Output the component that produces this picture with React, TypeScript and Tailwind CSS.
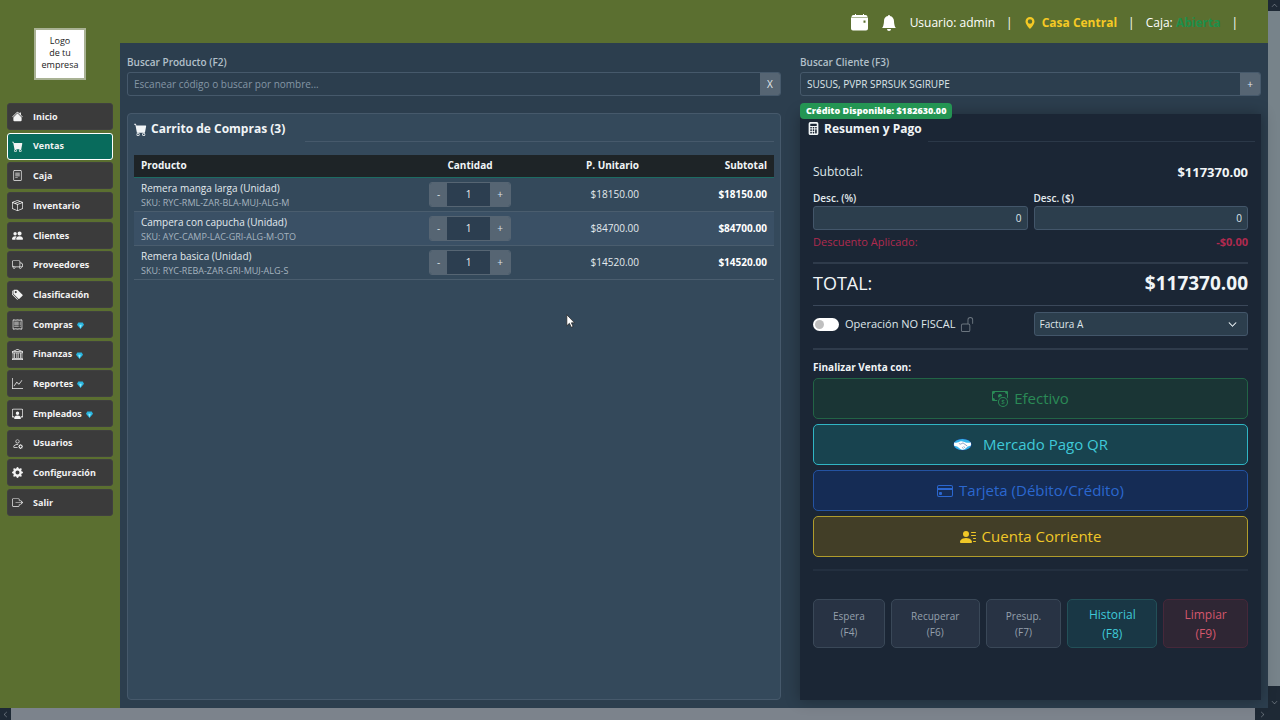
import React, { useState } from 'react';
import type { IconType } from 'react-icons';
import {
  BsBank,
  BsBellFill,
  BsBoxArrowRight,
  BsBoxSeam,
  BsCalculatorFill,
  BsCartFill,
  BsCashCoin,
  BsChevronDown,
  BsCreditCard,
  BsFileText,
  BsGearFill,
  BsGeoAltFill,
  BsGraphUp,
  BsHouseFill,
  BsPeopleFill,
  BsPersonGear,
  BsPersonLinesFill,
  BsPersonWorkspace,
  BsReceipt,
  BsTagsFill,
  BsTruck,
  BsUnlock,
} from 'react-icons/bs';

interface MenuItem {
  label: string;
  icon: IconType;
  premium?: boolean;
}

interface CartItem {
  name: string;
  sku: string;
  price: number;
}

const menu: MenuItem[] = [
  { label: 'Inicio', icon: BsHouseFill },
  { label: 'Ventas', icon: BsCartFill },
  { label: 'Caja', icon: BsFileText },
  { label: 'Inventario', icon: BsBoxSeam },
  { label: 'Clientes', icon: BsPeopleFill },
  { label: 'Proveedores', icon: BsTruck },
  { label: 'Clasificación', icon: BsTagsFill },
  { label: 'Compras', icon: BsReceipt, premium: true },
  { label: 'Finanzas', icon: BsBank, premium: true },
  { label: 'Reportes', icon: BsGraphUp, premium: true },
  { label: 'Empleados', icon: BsPersonWorkspace, premium: true },
  { label: 'Usuarios', icon: BsPersonGear },
  { label: 'Configuración', icon: BsGearFill },
  { label: 'Salir', icon: BsBoxArrowRight },
];

const items: CartItem[] = [
  { name: 'Remera manga larga (Unidad)', sku: 'RYC-RML-ZAR-BLA-MUJ-ALG-M', price: 18150 },
  { name: 'Campera con capucha (Unidad)', sku: 'AYC-CAMP-LAC-GRI-ALG-M-OTO', price: 84700 },
  { name: 'Remera basica (Unidad)', sku: 'RYC-REBA-ZAR-GRI-MUJ-ALG-S', price: 14520 },
];

const money = (value: number) => `$${value.toFixed(2)}`;

const Gem = () => (
  <svg viewBox="0 0 16 16" className="mt-[2px] ml-1 h-[7px] w-[7px]" aria-hidden="true">
    <path d="M3 1h10l3 5-8 10L0 6z" fill="#29b6e0" />
    <path d="M5 6h6l-3 9z" fill="#8be9fb" />
  </svg>
);

const CalendarIcon = () => (
  <svg viewBox="0 0 17 17" className="h-[17px] w-[17px]" fill="currentColor" aria-hidden="true">
    <path d="M4 0h1v1h7V0h1v1h1.500A2 2 0 0 1 16.500 3H.5a2 2 0 0 1 2-2H4z" />
    <path
      fillRule="evenodd"
      d="M0 3.600h17V14.500a2 2 0 0 1-2 2H2a2 2 0 0 1-2-2zM12.500 6.500v2.200h2V6.500z"
    />
  </svg>
);

const Handshake = () => (
  <svg viewBox="0 0 36 24" className="mr-[5px] h-[13px] w-[19px]" aria-hidden="true">
    <ellipse cx="18" cy="12" rx="17.5" ry="11.5" fill="#1d3f86" />
    <ellipse cx="18" cy="12" rx="16.4" ry="10.4" fill="#35b5ea" />
    <path d="M2 8c5 2 8 0 11-1.500 3-1.200 5-.6 7 .2 3 1.200 8 3 14 1.300v6l-6 2-6 5c-3 1.400-6 1-8-.3L8 16l-6-1.500z" fill="#fff" />
    <path d="M11 9.500c2 1.500 3 2.500 5 1l3-1.500 8 6M20 16l3 2M17 17.500l3 2" stroke="#31508f" strokeWidth="1" fill="none" />
  </svg>
);

const Sidebar: React.FC = () => (
  <aside className="flex w-[120px] shrink-0 flex-col px-[7px]">
    <div className="mx-auto mt-7 flex h-[52px] w-[52px] justify-center border-2 border-[#a9b294] bg-white pt-[5px] text-center text-[9px] leading-[12px] text-[#222]">
      Logo
      <br />
      de tu
      <br />
      empresa
    </div>
    <nav className="mt-[23px] flex h-[413px] flex-col justify-between">
      {menu.map(({ label, icon: Icon, premium }) => (
        <button
          key={label}
          className={`flex h-[27px] items-center rounded-[3px] border pl-1 text-left text-[9px] font-bold text-[#f3f3f3] ${
            label === 'Ventas' ? 'border-white bg-[#086b5c]' : 'border-[#404040] bg-[#3b3b3b]'
          }`}
        >
          <Icon className="mr-[10px] h-[11px] w-[11px]" />
          <span>{label}</span>
          {premium && <Gem />}
        </button>
      ))}
    </nav>
  </aside>
);

const TopBar: React.FC = () => (
  <header className="flex h-[43px] shrink-0 items-center justify-end gap-[11px] pt-[2px] pr-[30px] text-[12px] text-white">
    <button aria-label="Calendario" className="mr-[2px]">
      <CalendarIcon />
    </button>
    <button aria-label="Notificaciones" className="mr-[2px]">
      <BsBellFill className="h-4 w-4" />
    </button>
    <span>Usuario: admin</span>
    <span>|</span>
    <span className="flex items-center gap-[6px] font-bold text-[#f5c924]">
      <BsGeoAltFill className="h-3 w-3" />
      Casa Central
    </span>
    <span>|</span>
    <span>
      Caja: <b className="text-[#1d8f4a]">Abierta</b>
    </span>
    <span>|</span>
  </header>
);

const Quantity: React.FC<{ name: string }> = ({ name }) => {
  const [count, setCount] = useState(1);
  const buttonClass = 'bg-[#566573] text-[10px] text-[#dbe2e8]';
  return (
    <div className="mx-auto flex h-[25px] w-[82px] overflow-hidden rounded-[3px] border border-[#566573]">
      <button className={`w-[17px] ${buttonClass}`} onClick={() => setCount(Math.max(1, count - 1))}>-</button>
      <input
        aria-label={`Cantidad ${name}`}
        value={count}
        onChange={(e) => setCount(Number(e.target.value) || 1)}
        className="w-0 flex-1 bg-[#2c3e50] text-center text-[10px] text-[#ecf0f1] outline-none"
      />
      <button className={`w-[20px] ${buttonClass}`} onClick={() => setCount(count + 1)}>+</button>
    </div>
  );
};

const Cart: React.FC = () => (
  <section className="flex-1 rounded-[4px] border border-[#46596b] bg-[#34495b] px-[6px] pt-[6px]">
    <div className="flex items-end">
      <h2 className="flex h-[22px] items-start gap-1 pr-5 text-[12px] leading-[18px] font-bold text-[#f1f5f7]">
        <BsCartFill className="mt-[3px] h-[13px] w-[13px]" />
        Carrito de Compras (3)
      </h2>
      <div className="flex-1 border-b border-[#46596b]" />
    </div>
    <table className="mt-[13px] w-full table-fixed border-collapse text-[10px] text-[#e3eaee]">
      <thead>
        <tr className="h-[22px] border-b border-[#1d6b62] bg-[#1e2427] text-[#f1f5f7]">
          <th className="w-[42%] px-[7px] text-left">Producto</th>
          <th className="w-[21%] px-[7px] text-center">Cantidad</th>
          <th className="w-[17%] px-[7px] text-right">P. Unitario</th>
          <th className="w-[20%] px-[7px] text-right">Subtotal</th>
        </tr>
      </thead>
      <tbody>
        {items.map((item) => (
          <tr key={item.sku} className="border-b border-[#4a5d6e] even:bg-[#3a5065]">
            <td className="px-[7px] pt-[3px] pb-px">
              <div className="leading-[15px]">{item.name}</div>
              <div className="text-[9px] leading-[14px] text-[#a5b3bf]">SKU: {item.sku}</div>
            </td>
            <td className="px-[7px]">
              <Quantity name={item.name} />
            </td>
            <td className="px-[7px] text-right">{money(item.price)}</td>
            <td className="px-[7px] text-right font-bold text-white">{money(item.price)}</td>
          </tr>
        ))}
      </tbody>
    </table>
  </section>
);

const Summary: React.FC = () => {
  const fieldClass =
    'h-6 w-full rounded-[3px] border border-[#43566a] bg-[#2c3e4d] px-[5px] text-[10px] text-[#dfe6ea]';
  const payClass = 'flex h-[41px] items-center justify-center gap-[6px] rounded-[5px] border text-[15px]';
  const actionClass = 'rounded-[5px] border';
  const softClass = 'border-[#3a4858] bg-[#283344] text-[10px] leading-4 text-[#95a0ac]';

  return (
    <section className="relative flex-1 bg-[#1b2635] px-[13px] pt-[6px] shadow-[0_0_14px_rgba(0,0,0,0.3)]">
      <div className="-mx-[7px] flex items-end">
        <h2 className="flex h-[22px] items-start gap-1 pr-[6px] pl-[1px] text-[12px] leading-[18px] font-bold text-[#f1f5f7]">
          <BsCalculatorFill className="mt-[2px] h-[13px] w-[13px]" />
          Resumen y Pago
        </h2>
        <div className="flex-1 border-b border-[#2b3848]" />
      </div>

      <div className="mt-5 flex items-center justify-between text-[13px] leading-5 text-[#dfe6ea]">
        <span className="text-[12px]">Subtotal:</span>
        <b className="text-[#f1f5f7]">$117370.00</b>
      </div>

      <div className="mt-2 grid grid-cols-2 gap-[6px] text-[10px] font-semibold text-[#e3eaee]">
        <div>
          <label htmlFor="desc-pct" className="block leading-4">Desc. (%)</label>
          <input id="desc-pct" defaultValue="0" className={`${fieldClass} text-right font-normal`} />
        </div>
        <div>
          <label htmlFor="desc-amount" className="block leading-4">Desc. ($)</label>
          <input id="desc-amount" defaultValue="0" className={`${fieldClass} text-right font-normal`} />
        </div>
      </div>

      <div className="mt-1 flex justify-between text-[11px] leading-4 text-[#b02a4f]">
        <span>Descuento Aplicado:</span>
        <b>-$0.00</b>
      </div>

      <div className="mt-3 flex items-center justify-between border-t-2 border-[#2f3b4b] pb-[3px] leading-[38px] text-[#f1f5f7]">
        <span className="text-[18px]">TOTAL:</span>
        <b className="text-[19px]">$117370.00</b>
      </div>

      <div className="grid grid-cols-2 items-center gap-[6px] border-t border-b-2 border-t-[#3b485a] border-b-[#2f3b4b] pt-[6px] pb-3">
        <label className="flex items-center text-[11px] text-[#dfe6ea]">
          <input type="checkbox" className="peer sr-only" />
          <span className="mr-[6px] flex h-[13px] w-[26px] items-center rounded-full bg-white px-[2px] peer-checked:justify-end">
            <span className="h-[9px] w-[9px] rounded-full bg-[#bfbfbf]" />
          </span>
          Operación NO FISCAL
          <BsUnlock className="ml-[5px] h-[15px] w-[15px] text-[#6c7680]" />
        </label>
        <div className="relative">
          <select aria-label="Tipo de comprobante" className={`${fieldClass} block appearance-none`}>
            <option>Factura A</option>
          </select>
          <BsChevronDown className="pointer-events-none absolute top-2 right-[11px] h-[9px] w-[9px] stroke-1 text-[#e3eaee]" />
        </div>
      </div>

      <p className="mt-[9px] text-[10px] leading-4 font-bold text-[#f1f5f7]">Finalizar Venta con:</p>
      <div className="mt-[3px] flex flex-col gap-[5px]">
        <button className={`${payClass} border-[#226446] bg-[#1a3535] text-[#2a8a56]`}>
          <BsCashCoin className="h-4 w-4" />
          Efectivo
        </button>
        <button className={`${payClass} border-[#30b5c4] bg-[#18434f] text-[#3fc9d8]`}>
          <Handshake />
          Mercado Pago QR
        </button>
        <button className={`${payClass} border-[#2453a2] bg-[#152c55] text-[#2b67cf]`}>
          <BsCreditCard className="h-4 w-4" />
          Tarjeta (Débito/Crédito)
        </button>
        <button className={`${payClass} border-[#b09c2c] bg-[#423e27] text-[#f0c727]`}>
          <BsPersonLinesFill className="h-4 w-4" />
          Cuenta Corriente
        </button>
      </div>

      <div className="mt-3 grid h-[79px] grid-cols-[72fr_89fr_76fr_90fr_85fr] gap-[6px] border-t-2 border-[#232f3f] pt-7">
        <button className={`${actionClass} ${softClass}`}>Espera<br />(F4)</button>
        <button className={`${actionClass} ${softClass}`}>Recuperar<br />(F6)</button>
        <button className={`${actionClass} ${softClass}`}>Presup.<br />(F7)</button>
        <button className={`${actionClass} border-[#235058] bg-[#193745] text-[12px] leading-[19px] text-[#3fc9d8]`}>
          Historial<br />(F8)
        </button>
        <button className={`${actionClass} border-[#46283a] bg-[#2f2634] text-[12px] leading-[19px] text-[#d4576c]`}>
          Limpiar<br />(F9)
        </button>
      </div>
    </section>
  );
};

const App: React.FC = () => (
  <div className="flex min-h-screen flex-col overflow-hidden bg-[#5b6f30] font-['Open_Sans','Noto_Sans',sans-serif]">
    <div className="flex flex-1">
      <Sidebar />
      <div className="flex min-w-0 flex-1 flex-col">
        <TopBar />
        <main className="grid flex-1 grid-cols-[654fr_461fr] gap-[19px] bg-[#2c3e4e] px-[7px] pt-[11px] pb-2">
          <div className="flex flex-col">
            <label htmlFor="product" className="text-[10px] leading-4 font-semibold text-[#b3c0ca]">Buscar Producto (F2)</label>
            <div className="mt-[2px] mb-[17px] flex h-6 overflow-hidden rounded-[3px] border border-[#46596b] text-[10px]">
              <input
                id="product"
                placeholder="Escanear código o buscar por nombre..."
                className="min-w-0 flex-1 px-[6px] text-white outline-none placeholder:text-[#8496a5]"
              />
              <button className="w-5 bg-[#566573] text-[#e3eaee]">X</button>
            </div>
            <Cart />
          </div>
          <div className="flex flex-col">
            <label htmlFor="client" className="text-[10px] leading-4 font-semibold text-[#b3c0ca]">Buscar Cliente (F3)</label>
            <div className="mt-[2px] flex h-6 overflow-hidden rounded-[3px] border border-[#46596b] text-[10px]">
              <input
                id="client"
                defaultValue="SUSUS, PVPR SPRSUK SGIRUPE"
                className="min-w-0 flex-1 px-[6px] text-[#dfe6ea] outline-none"
              />
              <button className="w-5 bg-[#566573] text-[#e3eaee]">+</button>
            </div>
            <span className="z-10 mt-[7px] -mb-[5px] self-start rounded-[4px] bg-[#249553] px-[6px] text-[9px] leading-4 font-extrabold text-white">
              Crédito Disponible: $182630.00
            </span>
            <Summary />
          </div>
        </main>
      </div>
      <div className="flex w-3 shrink-0 flex-col bg-[#1e2935]">
        <BsChevronDown className="mx-auto my-[2px] h-[7px] w-[7px] rotate-180 text-[#8a929b]" />
        <div className="flex-1 bg-[#77838a]" />
        <BsChevronDown className="mx-auto mt-[13px] mb-[2px] h-[7px] w-[7px] text-[#8a929b]" />
      </div>
    </div>
    <div className="flex h-3 shrink-0 items-center bg-[#1e2935]">
      <BsChevronDown className="mx-[2px] h-[7px] w-[7px] rotate-90 text-[#8a929b]" />
      <div className="h-full flex-1 bg-[#7c838c]" />
      <BsChevronDown className="mr-[14px] ml-1 h-[7px] w-[7px] -rotate-90 text-[#8a929b]" />
    </div>
    {/* mouse pointer */}
    <svg viewBox="0 0 12 19" className="pointer-events-none absolute top-[314px] left-[566px] h-[14px] w-[9px]" aria-hidden="true">
      <path d="M1 1v15l3.500-3.300L7 18l2.500-1.100L7.200 12H11.500z" fill="#fff" stroke="#222" strokeWidth="1" />
    </svg>
  </div>
);

export default App;
